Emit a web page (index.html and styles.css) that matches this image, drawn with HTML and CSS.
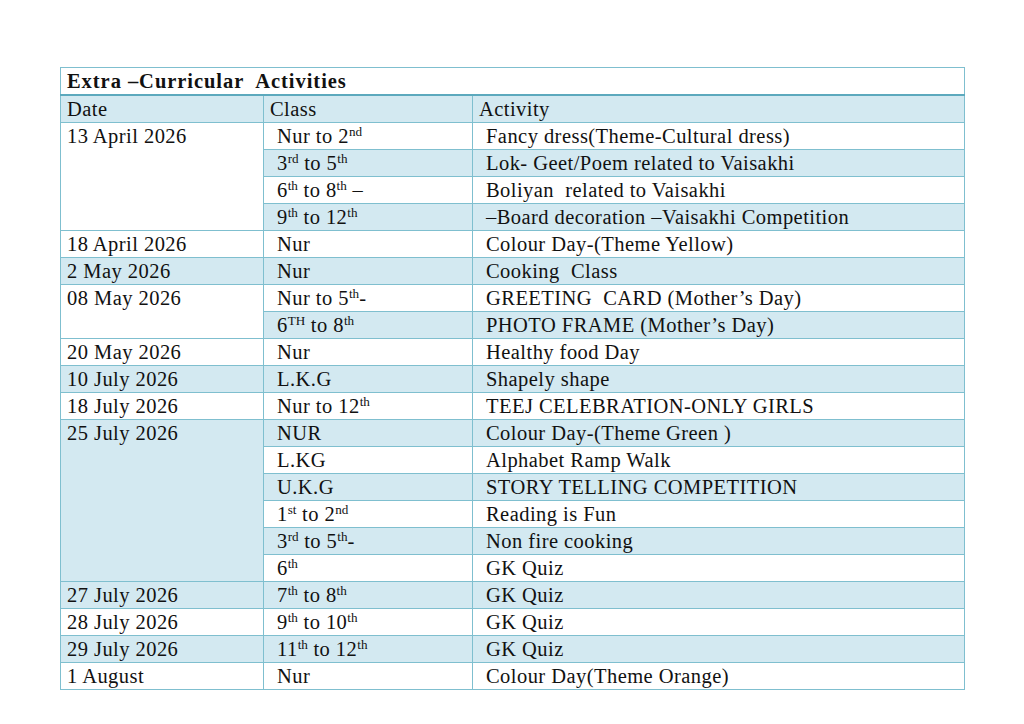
FILE: index.html
```html
<!DOCTYPE html>
<html>
<head>
<meta charset="utf-8">
<link rel="stylesheet" href="styles.css">
</head>
<body>
<div class="page">
<table class="sched">
  <colgroup>
    <col class="c-date">
    <col class="c-class">
    <col class="c-act">
  </colgroup>
  <tr class="title-row"><td colspan="3">Extra –Curricular&nbsp; Activities</td></tr>
  <tr class="head b"><td>Date</td><td>Class</td><td>Activity</td></tr>

  <tr><td rowspan="4" class="w">13 April 2026</td><td class="ind">Nur to 2<sup>nd</sup></td><td class="ind">Fancy dress(Theme-Cultural dress)</td></tr>
  <tr class="b"><td class="ind">3<sup>rd</sup> to 5<sup>th</sup></td><td class="ind">Lok- Geet/Poem related to Vaisakhi</td></tr>
  <tr><td class="ind">6<sup>th</sup> to 8<sup>th</sup> –</td><td class="ind">Boliyan&nbsp; related to Vaisakhi</td></tr>
  <tr class="b"><td class="ind">9<sup>th</sup> to 12<sup>th</sup></td><td class="ind">–Board decoration –Vaisakhi Competition</td></tr>

  <tr><td>18 April 2026</td><td class="ind">Nur</td><td class="ind">Colour Day-(Theme Yellow)</td></tr>
  <tr class="b"><td>2 May 2026</td><td class="ind">Nur</td><td class="ind">Cooking&nbsp; Class</td></tr>

  <tr><td rowspan="2" class="w">08 May 2026</td><td class="ind">Nur to 5<sup>th</sup>-</td><td class="ind">GREETING&nbsp; CARD (Mother’s Day)</td></tr>
  <tr class="b"><td class="ind">6<sup>TH</sup> to 8<sup>th</sup></td><td class="ind">PHOTO FRAME (Mother’s Day)</td></tr>

  <tr><td>20 May 2026</td><td class="ind">Nur</td><td class="ind">Healthy food Day</td></tr>
  <tr class="b"><td>10 July 2026</td><td class="ind">L.K.G</td><td class="ind">Shapely shape</td></tr>
  <tr><td>18 July 2026</td><td class="ind">Nur to 12<sup>th</sup></td><td class="ind">TEEJ CELEBRATION-ONLY GIRLS</td></tr>

  <tr class="b"><td rowspan="6" class="bl">25 July 2026</td><td class="ind">NUR</td><td class="ind">Colour Day-(Theme Green )</td></tr>
  <tr><td class="ind">L.KG</td><td class="ind">Alphabet Ramp Walk</td></tr>
  <tr class="b"><td class="ind">U.K.G</td><td class="ind">STORY TELLING COMPETITION</td></tr>
  <tr><td class="ind">1<sup>st</sup> to 2<sup>nd</sup></td><td class="ind">Reading is Fun</td></tr>
  <tr class="b"><td class="ind">3<sup>rd</sup> to 5<sup>th</sup>-</td><td class="ind">Non fire cooking</td></tr>
  <tr><td class="ind">6<sup>th</sup></td><td class="ind">GK Quiz</td></tr>

  <tr class="b"><td>27 July 2026</td><td class="ind">7<sup>th</sup> to 8<sup>th</sup></td><td class="ind">GK Quiz</td></tr>
  <tr><td>28 July 2026</td><td class="ind">9<sup>th</sup> to 10<sup>th</sup></td><td class="ind">GK Quiz</td></tr>
  <tr class="b"><td>29 July 2026</td><td class="ind">11<sup>th</sup> to 12<sup>th</sup></td><td class="ind">GK Quiz</td></tr>
  <tr><td>1 August</td><td class="ind">Nur</td><td class="ind">Colour Day(Theme Orange)</td></tr>
</table>
</div>
</body>
</html>
```

FILE: styles.css
```css
html, body {
  margin: 0;
  padding: 0;
  background: #ffffff;
}

.page {
  padding: 67px 0 0 60px;
}

.sched {
  border-collapse: collapse;
  table-layout: fixed;
  width: 904px;
  font-family: "Liberation Serif", "Times New Roman", serif;
  font-size: 20.5px;
  letter-spacing: 0.45px;
  color: #111111;
  border: 1px solid #a6d0dc;
}

.c-date { width: 203px; }
.c-class { width: 209px; }
.c-act { width: 492px; }

.sched td {
  height: 26px;
  padding: 0 4px 0 6px;
  border: 1px solid #7fbfcf;
  vertical-align: top;
  line-height: 26px;
  white-space: nowrap;
  background: #ffffff;
}

.sched tr.title-row td {
  height: 25px;
}

.sched tr.b td {
  background: #d3e9f1;
}

.sched td.w,
.sched tr.b td.w {
  background: #ffffff;
}

.sched td.bl {
  background: #d3e9f1;
}

.sched td.ind {
  padding-left: 13px;
}

.title-row td {
  font-weight: bold;
  letter-spacing: 0.95px;
  border-bottom: 2px solid #5ca9bd;
}

.head td {
  border-top: 2px solid #5ca9bd;
}

.sched sup {
  font-size: 0.64em;
  line-height: 0;
  letter-spacing: 0;
  vertical-align: 0.55em;
}
```
